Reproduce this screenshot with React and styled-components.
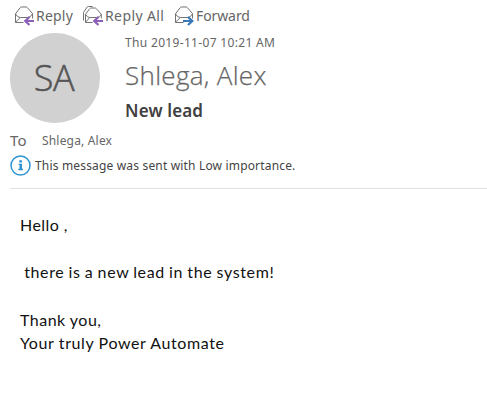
import React from 'react'
import styled, { createGlobalStyle } from 'styled-components'

const GlobalStyles = createGlobalStyle`
  * {
    box-sizing: border-box;
  }

  body {
    margin: 0;
    background: #fff;
    font-family: "Noto Sans", "Open Sans", sans-serif;
    color: #666;
  }
`

const StyledMessage = styled.main`
  width: 100%;
  height: 401px;
  overflow: hidden;
  white-space: pre;
`

const Toolbar = styled.nav`
  display: flex;
  height: 32px;
  padding-left: 14px;
`

const ToolbarButton = styled.button`
  display: flex;
  align-items: center;
  flex: none;
  width: ${({ $width }) => $width}px;
  height: 32px;
  padding: 0;
  border: 0;
  background: none;
  font: 14px/20px "Noto Sans", "Open Sans", sans-serif;
  letter-spacing: ${({ $tracking }) => $tracking}px;
  color: #666;

  svg {
    flex: none;
    margin-right: 1px;
  }
`

const Header = styled.header`
  display: flex;
  gap: 25px;
  height: 97px;
  padding: 1px 0 0 10px;
`

const Avatar = styled.div`
  display: grid;
  place-items: center;
  width: 90px;
  height: 90px;
  padding-right: 2px;
  border-radius: 50%;
  background: #d1d1d1;
  color: #555;
  font-family: "Open Sans", sans-serif;
  font-size: 36px;
  font-weight: 300;
  line-height: 90px;
  letter-spacing: -0.3px;
  -webkit-text-stroke: 0.5px #555;
`

const Sent = styled.div`
  height: 20px;
  font-size: 12px;
  line-height: 20px;
  letter-spacing: 0.33px;
`

const Sender = styled.h1`
  height: 46px;
  margin: 0;
  font-family: "Open Sans", sans-serif;
  font-size: 26px;
  font-weight: 300;
  line-height: 44px;
  letter-spacing: 0.3px;
  -webkit-text-stroke: 0.25px #666;
`

const Subject = styled.h2`
  margin: 0;
  height: 24px;
  font-size: 17px;
  font-weight: 600;
  line-height: 24px;
  letter-spacing: 0.15px;
  color: #404040;
`

const Recipients = styled.div`
  display: flex;
  height: 24px;
  padding-left: 10px;
  font-size: 12px;
  line-height: 23px;
  letter-spacing: 0.18px;
`

const ToLabel = styled.span`
  width: 32px;
  font-size: 15px;
`

const Notice = styled.div`
  display: flex;
  align-items: center;
  gap: 4px;
  height: 25px;
  padding-left: 10px;
  font-size: 12px;
  letter-spacing: 0.17px;
  color: #444;
`

const Divider = styled.hr`
  height: 1px;
  margin: 10px 0 0 10px;
  border: 0;
  background: #e1e1e1;
`

const Body = styled.article`
  padding: 24px 0 0 20px;
  font-family: Lato, sans-serif;
  font-size: 16px;
  color: #111;
`

const Line = styled.p`
  height: ${({ $height }) => $height || 47}px;
  margin: 0;
  line-height: 24px;
  letter-spacing: ${({ $tracking }) => $tracking || 0}px;
  word-spacing: ${({ $wordGap }) => $wordGap || 0}px;
`

const MailIcon = ({ arrow, forward }) => (
  <svg width="21" height="20" viewBox="0 0 21 20" fill="none">
    <path
      d="M9.5 16.5h-8V7.8L6.2 1.6Q6.7 1 7.4 1h4.8q.7 0 1.2.6l5.1 6v4.9M1.5 7.8q1.8 3.7 4.8 3.7h7.4q3 0 4.8-3.7M1.5 16.3l4.8-4.8M13.7 11.5l1.3 1"
      stroke="#737373"
    />
    <path
      d={forward ? 'M9 15h9M14 11l4.3 4-4.3 4' : 'M20 15h-8M15.5 11l-4.3 4 4.3 4'}
      stroke={arrow}
      strokeWidth="2.2"
    />
  </svg>
)

const MailAllIcon = ({ arrow }) => (
  <svg width="22" height="20" viewBox="0 0 22 20" fill="none">
    <path
      d="M1.5 14.5V6.5L5.2.9Q5.5.5 6.2.5h4.5M10.5 16.5h-7V8.3l4.3-5.7q.4-.6 1.1-.6h4.2q.7 0 1.2.6l5 5.7v4.2M3.5 8.3q1.6 3.2 4.3 3.2h7q3 0 4.5-3.2M3.5 16.3l4.3-4.8"
      stroke="#737373"
    />
    <path d="M21 15h-8M16.5 11l-4.3 4 4.3 4" stroke={arrow} strokeWidth="2.2" />
  </svg>
)

const InfoIcon = () => (
  <svg width="21" height="21" viewBox="0 0 21 21" fill="none">
    <circle cx="10.5" cy="10.5" r="9.5" stroke="#2e94d0" strokeWidth="1.5" />
    <path d="M9.3 5.2h2.7v2.2H9.3zM8.6 8.7H12v5.1h1v1.4H8.3v-1.4h1.2V10h-.9z" fill="#2e94d0" />
  </svg>
)

const App = () => {
  return (
    <StyledMessage>
      <GlobalStyles />
      <Toolbar>
        <ToolbarButton $width={68} $tracking={0.2}>
          <MailIcon arrow="#8b5fb5" />
          Reply
        </ToolbarButton>
        <ToolbarButton $width={92} $tracking={0.4}>
          <MailAllIcon arrow="#8b5fb5" />
          Reply All
        </ToolbarButton>
        <ToolbarButton $width={80} $tracking={-0.1}>
          <MailIcon arrow="#3878b8" forward />
          Forward
        </ToolbarButton>
      </Toolbar>

      <Header>
        <Avatar>SA</Avatar>
        <div>
          <Sent>Thu 2019-11-07 10:21 AM</Sent>
          <Sender>Shlega, Alex</Sender>
          <Subject>New lead</Subject>
        </div>
      </Header>

      <Recipients>
        <ToLabel>To</ToLabel>
        <span>Shlega, Alex</span>
      </Recipients>
      <Notice>
        <InfoIcon />
        <span>This message was sent with Low importance.</span>
      </Notice>
      <Divider />

      <Body>
        <Line $tracking={0.45}>Hello ,</Line>
        <Line $height={48} $tracking={0.65} $wordGap={-0.6}> there is a new lead in the system!</Line>
        <Line $height={23} $tracking={0.48}>Thank you,</Line>
        <Line $tracking={0.6}>Your truly Power Automate</Line>
      </Body>
    </StyledMessage>
  )
}

export default App
